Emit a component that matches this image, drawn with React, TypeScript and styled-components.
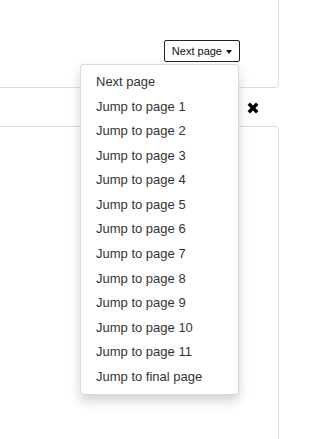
import styled, { createGlobalStyle } from "styled-components";
import { FaCog } from "react-icons/fa";

const pages = Array.from({ length: 11 }, (_, i) => i + 1);

const CloseIcon = () => (
  <svg width="12" height="12" viewBox="0 0 12 12">
    <path d="M1.8 1.8 L10.2 10.2 M10.2 1.8 L1.8 10.2" stroke="#000" strokeWidth="3.4" strokeLinecap="butt" />
  </svg>
);

const App = () => {
  return <Page>
    <GlobalStyle />
    <TopPanel>
      <Dropdown>
        <MenuButton type="button">
          Next page <Caret />
        </MenuButton>
        <Menu>
          <MenuItem>Next page</MenuItem>
          {pages.map((p) => <MenuItem key={p}>{`Jump to page ${p}`}</MenuItem>)}
          <MenuItem>Jump to final page</MenuItem>
        </Menu>
      </Dropdown>
    </TopPanel>
    <Toolbar>
      <ToolIcon $color="#666"><FaCog size={11} /></ToolIcon>
      <ToolIcon $color="#000"><CloseIcon /></ToolIcon>
    </Toolbar>
    <BottomPanel />
  </Page>
};

const GlobalStyle = createGlobalStyle`
  html, body {
    margin: 0;
    background: #fff;
    font-family: "Liberation Sans", Arial, sans-serif;
    overflow: hidden;
  }
`;

const Page = styled.div`
  width: 305px;
  height: 439px;
  overflow: hidden;
  box-sizing: border-box;
  padding-right: 26px;
  display: flex;
  flex-direction: column;
`;

const TopPanel = styled.div`
  margin: -12px 0 0 -10px;
  height: 100px;
  flex-shrink: 0;
  box-sizing: border-box;
  border: 1px solid #ddd;
  border-radius: 4px;
  display: flex;
  align-items: flex-end;
  justify-content: flex-end;
  padding: 0 38px 25px 0;
  position: relative;
  z-index: 2;
`;

const Dropdown = styled.div`
  position: relative;
`;

const MenuButton = styled.button`
  height: 22px;
  box-sizing: border-box;
  padding: 0 7px;
  background: #fff;
  border: 1px solid #222;
  border-radius: 2px;
  font-family: "Liberation Sans", Arial, sans-serif;
  font-size: 11px;
  color: #111;
  display: flex;
  align-items: center;
  gap: 4px;
`;

const Caret = styled.span`
  display: inline-block;
  width: 0;
  height: 0;
  border-left: 3.5px solid transparent;
  border-right: 3.5px solid transparent;
  border-top: 4px solid #111;
  margin-top: 1px;
`;

const Menu = styled.ul`
  position: absolute;
  top: calc(100% + 2px);
  right: 1px;
  box-sizing: border-box;
  min-width: 159px;
  margin: 0;
  padding: 5px 0;
  list-style: none;
  background: #fff;
  border: 1px solid rgba(0, 0, 0, 0.15);
  border-radius: 4px;
  box-shadow: 0 6px 12px rgba(0, 0, 0, 0.175);
`;

const MenuItem = styled.li`
  padding: 3px 15px;
  font-size: 13px;
  line-height: 1.42857;
  color: #333;
  white-space: nowrap;
`;

const Toolbar = styled.div`
  height: 38px;
  flex-shrink: 0;
  display: flex;
  align-items: center;
  justify-content: flex-end;
  gap: 9px;
  padding: 2px 20px 0 0;
  box-sizing: border-box;
`;

const ToolIcon = styled.span<{ $color: string }>`
  display: flex;
  color: ${(p) => p.$color};
`;

const BottomPanel = styled.div`
  margin-left: -10px;
  height: 340px;
  flex-shrink: 0;
  border: 1px solid #ddd;
  border-radius: 4px;
`;

export default App;
